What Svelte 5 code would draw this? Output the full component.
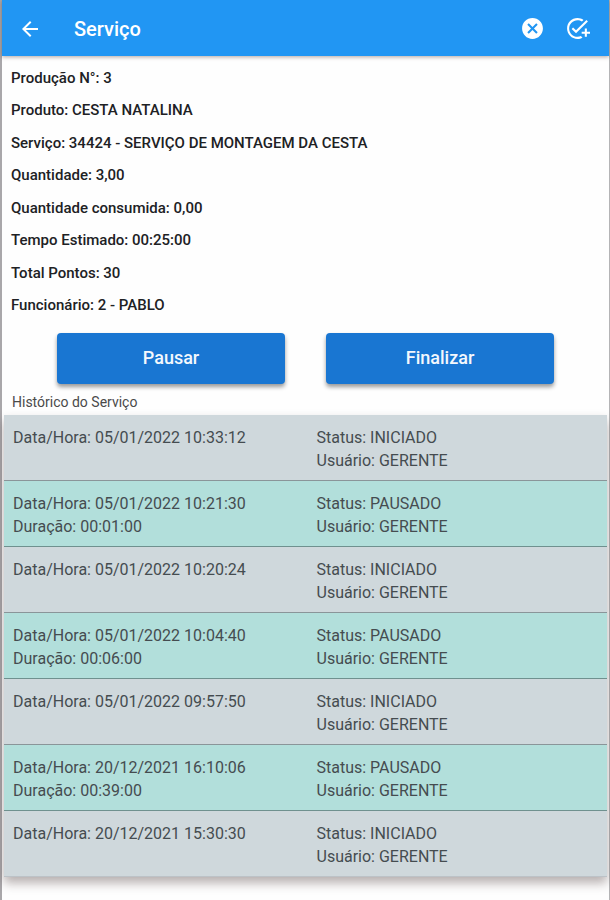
<script>
  const details = [
    ['Produção N°', '3'],
    ['Produto', 'CESTA NATALINA'],
    ['Serviço', '34424 - SERVIÇO DE MONTAGEM DA CESTA'],
    ['Quantidade', '3,00'],
    ['Quantidade consumida', '0,00'],
    ['Tempo Estimado', '00:25:00'],
    ['Total Pontos', '30'],
    ['Funcionário', '2 - PABLO'],
  ];

  const history = [
    { date: '05/01/2022 10:33:12', status: 'INICIADO', user: 'GERENTE' },
    { date: '05/01/2022 10:21:30', duration: '00:01:00', status: 'PAUSADO', user: 'GERENTE' },
    { date: '05/01/2022 10:20:24', status: 'INICIADO', user: 'GERENTE' },
    { date: '05/01/2022 10:04:40', duration: '00:06:00', status: 'PAUSADO', user: 'GERENTE' },
    { date: '05/01/2022 09:57:50', status: 'INICIADO', user: 'GERENTE' },
    { date: '20/12/2021 16:10:06', duration: '00:39:00', status: 'PAUSADO', user: 'GERENTE' },
    { date: '20/12/2021 15:30:30', status: 'INICIADO', user: 'GERENTE' },
  ];
</script>

<div class="screen">
  <header class="appbar">
    <button class="icon" aria-label="Voltar">
      <svg viewBox="0 0 24 24" width="24" height="24"><path d="M20 11H7.83l5.59-5.59L12 4l-8 8 8 8 1.41-1.41L7.83 13H20v-2z" /></svg>
    </button>
    <h1>Serviço</h1>
    <button class="icon" aria-label="Cancelar">
      <svg viewBox="0 0 24 24" width="25" height="25"><path d="M12 2C6.47 2 2 6.47 2 12s4.47 10 10 10 10-4.47 10-10S17.53 2 12 2zm5 13.59L15.59 17 12 13.41 8.41 17 7 15.59 10.59 12 7 8.41 8.41 7 12 10.59 15.59 7 17 8.41 13.41 12 17 15.59z" /></svg>
    </button>
    <button class="icon" aria-label="Adicionar tarefa">
      <svg viewBox="0 0 24 24" width="25" height="25"><path d="M22 5.18L10.59 16.6l-4.24-4.24 1.41-1.41 2.83 2.83 10-10L22 5.18zM12 20c-4.41 0-8-3.59-8-8s3.59-8 8-8c1.57 0 3.04.46 4.28 1.25l1.45-1.45C16.1 2.67 14.13 2 12 2 6.48 2 2 6.48 2 12s4.48 10 10 10c1.73 0 3.36-.44 4.78-1.22l-1.5-1.5c-1 .46-2.11.72-3.28.72zm7-5h-3v2h3v3h2v-3h3v-2h-3v-3h-2v3z" /></svg>
    </button>
  </header>

  <main>
    <section class="details">
      {#each details as [label, value]}
        <p>{label}: {value}</p>
      {/each}
    </section>

    <div class="actions">
      <button>Pausar</button>
      <button>Finalizar</button>
    </div>

    <h2>Histórico do Serviço</h2>
    <ul class="history">
      {#each history as item}
        <li class:paused={item.status === 'PAUSADO'}>
          <div>
            <p>Data/Hora: {item.date}</p>
            {#if item.duration}<p>Duração: {item.duration}</p>{/if}
          </div>
          <div>
            <p>Status: {item.status}</p>
            <p>Usuário: {item.user}</p>
          </div>
        </li>
      {/each}
    </ul>
  </main>
</div>

<style>
  .screen {
    box-sizing: border-box;
    min-height: 100vh;
    border-left: 2px solid #a9a7aa;
    border-right: 1px solid #b4b4b6;
    background: #fefefe;
    color: #202124;
    font-family: Roboto, sans-serif;
  }
  h1, h2, p, ul {
    margin: 0;
    padding: 0;
  }
  button {
    border: 0;
    font-family: inherit;
    cursor: pointer;
  }
  .appbar {
    display: flex;
    align-items: center;
    box-sizing: border-box;
    height: 56px;
    padding: 1px 9px 0 5px;
    background: #2196f3;
    color: #fff;
    box-shadow: 0 1px 4px rgba(60, 30, 20, 0.4);
  }
  h1 {
    flex: 1;
    padding-left: 22px;
    font-size: 20px;
    font-weight: 500;
    line-height: 24px;
  }
  .icon {
    display: flex;
    align-items: center;
    justify-content: center;
    width: 45px;
    height: 48px;
    padding: 0;
    background: none;
    color: inherit;
  }
  .icon svg {
    fill: currentColor;
  }
  .details {
    display: flex;
    flex-direction: column;
    justify-content: space-between;
    min-height: 247px;
    padding: 12px 9px 16px;
    font-size: 15px;
    font-weight: 500;
    line-height: 20px;
  }
  .actions {
    display: grid;
    grid-template-columns: 1fr 1fr;
    gap: 41px;
    padding: 2px 55px 0;
  }
  .actions button {
    height: 51px;
    padding: 0 6px 2px;
    border-radius: 4px;
    background: #1976d2;
    color: #f4f8fd;
    font-size: 18px;
    font-weight: 500;
    box-shadow: 0 3px 4px rgba(0, 0, 0, 0.4);
  }
  h2 {
    padding: 8px 10px 3px;
    font-size: 14px;
    font-weight: 400;
    line-height: 20px;
    color: #4a4a4a;
  }
  .history {
    margin: 0 2px;
    list-style: none;
    box-shadow: 0 6px 10px rgba(50, 30, 30, 0.35);
  }
  li {
    display: grid;
    grid-template-columns: 1fr 1fr;
    padding: 11px 9px 8px;
    border-bottom: 1px solid #8a9599;
    background: #cfd8dc;
    color: #454c50;
    font-size: 16px;
    line-height: 23px;
  }
  li div + div {
    padding-left: 11px;
  }
  li.paused {
    background: #b2dfdb;
    border-color: #6f918f;
  }
  li:last-child {
    border-color: #bcc2c7;
  }
</style>
